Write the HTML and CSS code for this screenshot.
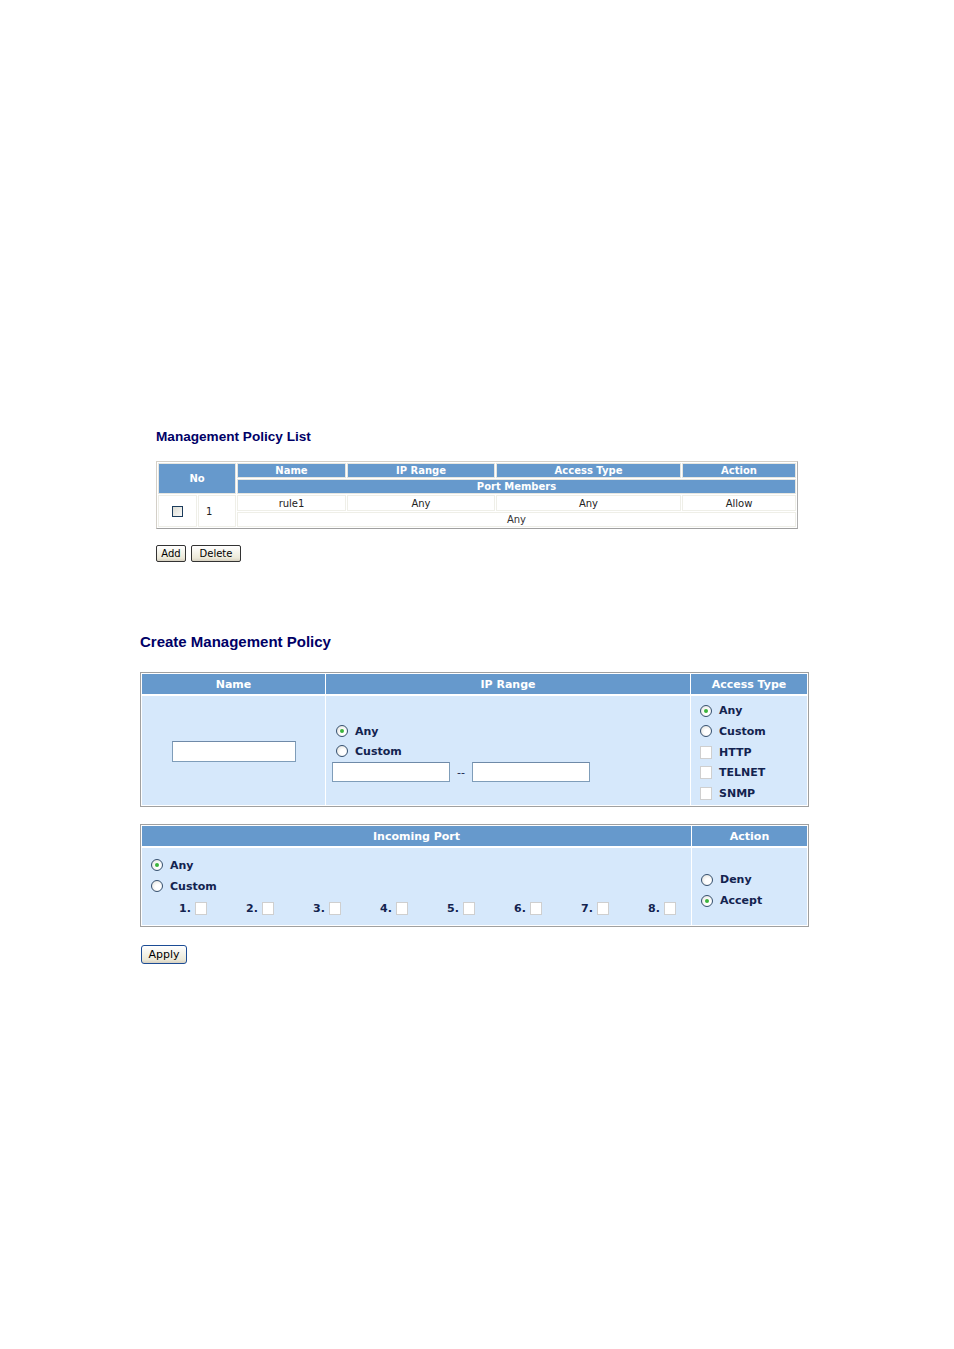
FILE: index.html
```html
<!DOCTYPE html>
<html>
<head>
<meta charset="utf-8">
<link rel="stylesheet" href="styles.css">
</head>
<body>
<div class="page">
  <section class="list">
    <h2 class="title1">Management Policy List</h2>
    <table class="t1">
      <colgroup>
        <col class="k1"><col class="k2"><col class="k3"><col class="k4"><col class="k5"><col class="k6">
      </colgroup>
      <tr class="h">
        <th colspan="2" rowspan="2">No</th>
        <th>Name</th>
        <th>IP Range</th>
        <th>Access Type</th>
        <th>Action</th>
      </tr>
      <tr class="h">
        <th colspan="4">Port Members</th>
      </tr>
      <tr class="d">
        <td rowspan="2" class="c-chk"><span class="cb1"></span></td>
        <td rowspan="2" class="c-num">1</td>
        <td>rule1</td>
        <td>Any</td>
        <td>Any</td>
        <td>Allow</td>
      </tr>
      <tr class="d2">
        <td colspan="4">Any</td>
      </tr>
    </table>
    <div class="btns">
      <button class="btn btn-add">Add</button>
      <button class="btn btn-del">Delete</button>
    </div>
  </section>

  <section class="create">
    <h2 class="title2">Create Management Policy</h2>
    <table class="t2">
      <colgroup><col class="m1"><col class="m2"><col class="m3"></colgroup>
      <tr class="h">
        <th>Name</th>
        <th>IP Range</th>
        <th>Access Type</th>
      </tr>
      <tr class="b">
        <td class="name-cell"><span class="field f-name"></span></td>
        <td class="ip-cell">
          <div class="opt"><span class="radio on"></span>Any</div>
          <div class="opt"><span class="radio"></span>Custom</div>
          <div class="iprow"><span class="field f-ip"></span><span class="dash">--</span><span class="field f-ip"></span></div>
        </td>
        <td class="acc-cell">
          <div class="opt2"><span class="radio on"></span>Any</div>
          <div class="opt2"><span class="radio"></span>Custom</div>
          <div class="opt2"><span class="cb"></span>HTTP</div>
          <div class="opt2"><span class="cb"></span>TELNET</div>
          <div class="opt2"><span class="cb"></span>SNMP</div>
        </td>
      </tr>
    </table>

    <table class="t3">
      <colgroup><col class="p1"><col class="p2"></colgroup>
      <tr class="h">
        <th>Incoming Port</th>
        <th>Action</th>
      </tr>
      <tr class="b">
        <td class="port-cell">
          <div class="opt3"><span class="radio on"></span>Any</div>
          <div class="opt3"><span class="radio"></span>Custom</div>
          <div class="ports">
            <span class="port">1.<span class="cb"></span></span>
            <span class="port">2.<span class="cb"></span></span>
            <span class="port">3.<span class="cb"></span></span>
            <span class="port">4.<span class="cb"></span></span>
            <span class="port">5.<span class="cb"></span></span>
            <span class="port">6.<span class="cb"></span></span>
            <span class="port">7.<span class="cb"></span></span>
            <span class="port">8.<span class="cb"></span></span>
          </div>
        </td>
        <td class="act-cell">
          <div class="opt3"><span class="radio"></span>Deny</div>
          <div class="opt3"><span class="radio on"></span>Accept</div>
        </td>
      </tr>
    </table>

    <button class="btn apply">Apply</button>
  </section>
</div>
</body>
</html>
```

FILE: styles.css
```css
* { box-sizing: border-box; }
html, body { margin: 0; padding: 0; background: #fff; }
.page { padding-top: 428px; font-family: "DejaVu Sans", Verdana, sans-serif; }

.list { margin-left: 156px; }
.title1 {
  margin: 0 0 16px 0;
  font-family: "Liberation Sans", Arial, sans-serif;
  font-size: 13.6px; font-weight: bold; line-height: 17px;
  color: #000066;
}
.t1 {
  width: 642px;
  table-layout: fixed;
  border-collapse: separate;
  border-spacing: 1px;
  border: 1px solid #d4d0c8;
  border-bottom-color: #a0a0a0;
  border-right-color: #b0b0b0;
  background: #fff;
}
.t1 .k1 { width: 39px; }
.t1 .k2 { width: 38px; }
.t1 .k3 { width: 109px; }
.t1 .k4 { width: 148px; }
.t1 .k5 { width: 185px; }
.t1 .k6 { width: auto; }
.t1 th {
  background: #6699cc;
  color: #fff;
  font-size: 10px; font-weight: bold;
  height: 15px; padding: 0; line-height: 13px;
  border: 1px solid #e6e6e0;
}
.t1 td {
  font-size: 10px; color: #222; text-align: center;
  height: 16px; padding: 0; line-height: 13px;
  border: 1px solid #efefe8;
}
.t1 .d2 td { height: 15px; color: #333; }
.t1 .c-num { text-align: left; padding-left: 7px; }
.cb1 {
  display: inline-block; width: 11px; height: 11px;
  border: 1px solid #1c3c5c;
  background: linear-gradient(135deg, #dcdcd4, #fafaf8);
  vertical-align: middle;
}

.btns { margin-top: 16px; display: flex; gap: 5px; }
.btn {
  font-family: "DejaVu Sans", Verdana, sans-serif;
  font-size: 10px; color: #000;
  height: 17px; padding: 0 3px; line-height: 14px;
  border: 1px solid #333; border-radius: 2px;
  background: linear-gradient(#ffffff, #ece9d8 80%, #d6d0c0);
}
.btn-add { width: 30px; }
.btn-del { width: 50px; }

.create { margin-left: 140px; margin-top: 71px; }
.title2 {
  margin: 0 0 21px 0;
  font-family: "Liberation Sans", Arial, sans-serif;
  font-size: 15px; font-weight: bold; line-height: 18px;
  color: #000066;
}
.t2, .t3 {
  width: 669px;
  table-layout: fixed;
  border-collapse: separate;
  border-spacing: 1px;
  border: 1px solid #a0a0a0;
  background: #fff;
}
.m1 { width: 183px; }
.m2 { width: 364px; }
.m3 { width: auto; }
.p1 { width: 549px; }
.p2 { width: auto; }
.t2 th, .t3 th {
  background: #6699cc; color: #fff;
  font-size: 11px; font-weight: bold;
  height: 21px; padding: 0; line-height: 19px;
  border-bottom: 1px solid #fff;
}
.t2 td, .t3 td {
  background: #d6e8fb;
  font-size: 11px; font-weight: bold; color: #13234f;
  padding: 0; vertical-align: middle;
}
.t2 .b td { height: 109px; }
.name-cell { text-align: center; }
.field {
  display: inline-block; background: #fff;
  border: 1px solid #7f9db9;
  border-top-color: #6f8aa8;
}
.f-name { width: 124px; height: 21px; margin-left: 0; margin-top: 4px; }
.ip-cell { padding-left: 6px !important; padding-top: 4px !important; }
.opt { height: 20px; display: flex; align-items: center; padding-left: 4px; }
.iprow { display: flex; align-items: center; height: 22px; margin-bottom: 1px; }
.f-ip { width: 118px; height: 20px; }
.dash { width: 22px; text-align: center; font-weight: normal; }
.radio {
  display: inline-block; width: 12px; height: 12px; border-radius: 50%;
  border: 1px solid #36506e;
  background: radial-gradient(circle at 60% 60%, #fff 30%, #dcdcd6 100%);
  margin-right: 7px; position: relative;
  flex: none;
}
.radio.on::after {
  content: ""; position: absolute; left: 3px; top: 3px;
  width: 4px; height: 4px; border-radius: 50%;
  background: #3cb43c;
}
.cb {
  display: inline-block; width: 12px; height: 13px; flex: none;
  background: #fff; border: 1px solid #cfcfcf;
}
.acc-cell { padding-left: 9px !important; padding-top: 3px !important; }
.opt2 { height: 20.7px; display: flex; align-items: center; }
.opt2 .cb { margin-right: 7px; }

.t3 { margin-top: 17px; }
.t3 .b td { height: 77px; }
.port-cell { padding: 2px 0 0 9px !important; }
.opt3 { height: 21px; display: flex; align-items: center; }
.ports { display: flex; padding-left: 28px; height: 24px; align-items: center; }
.port { width: 67px; flex: none; display: flex; align-items: center; }
.port .cb { margin-left: 4px; }
.act-cell { padding-left: 9px !important; padding-top: 7px !important; }

.apply {
  display: block; margin-top: 18px; margin-left: 1px;
  width: 46px; height: 19px; font-size: 11px;
  border: 1px solid #1c4c94; border-radius: 3px;
  color: #000;
}
```
